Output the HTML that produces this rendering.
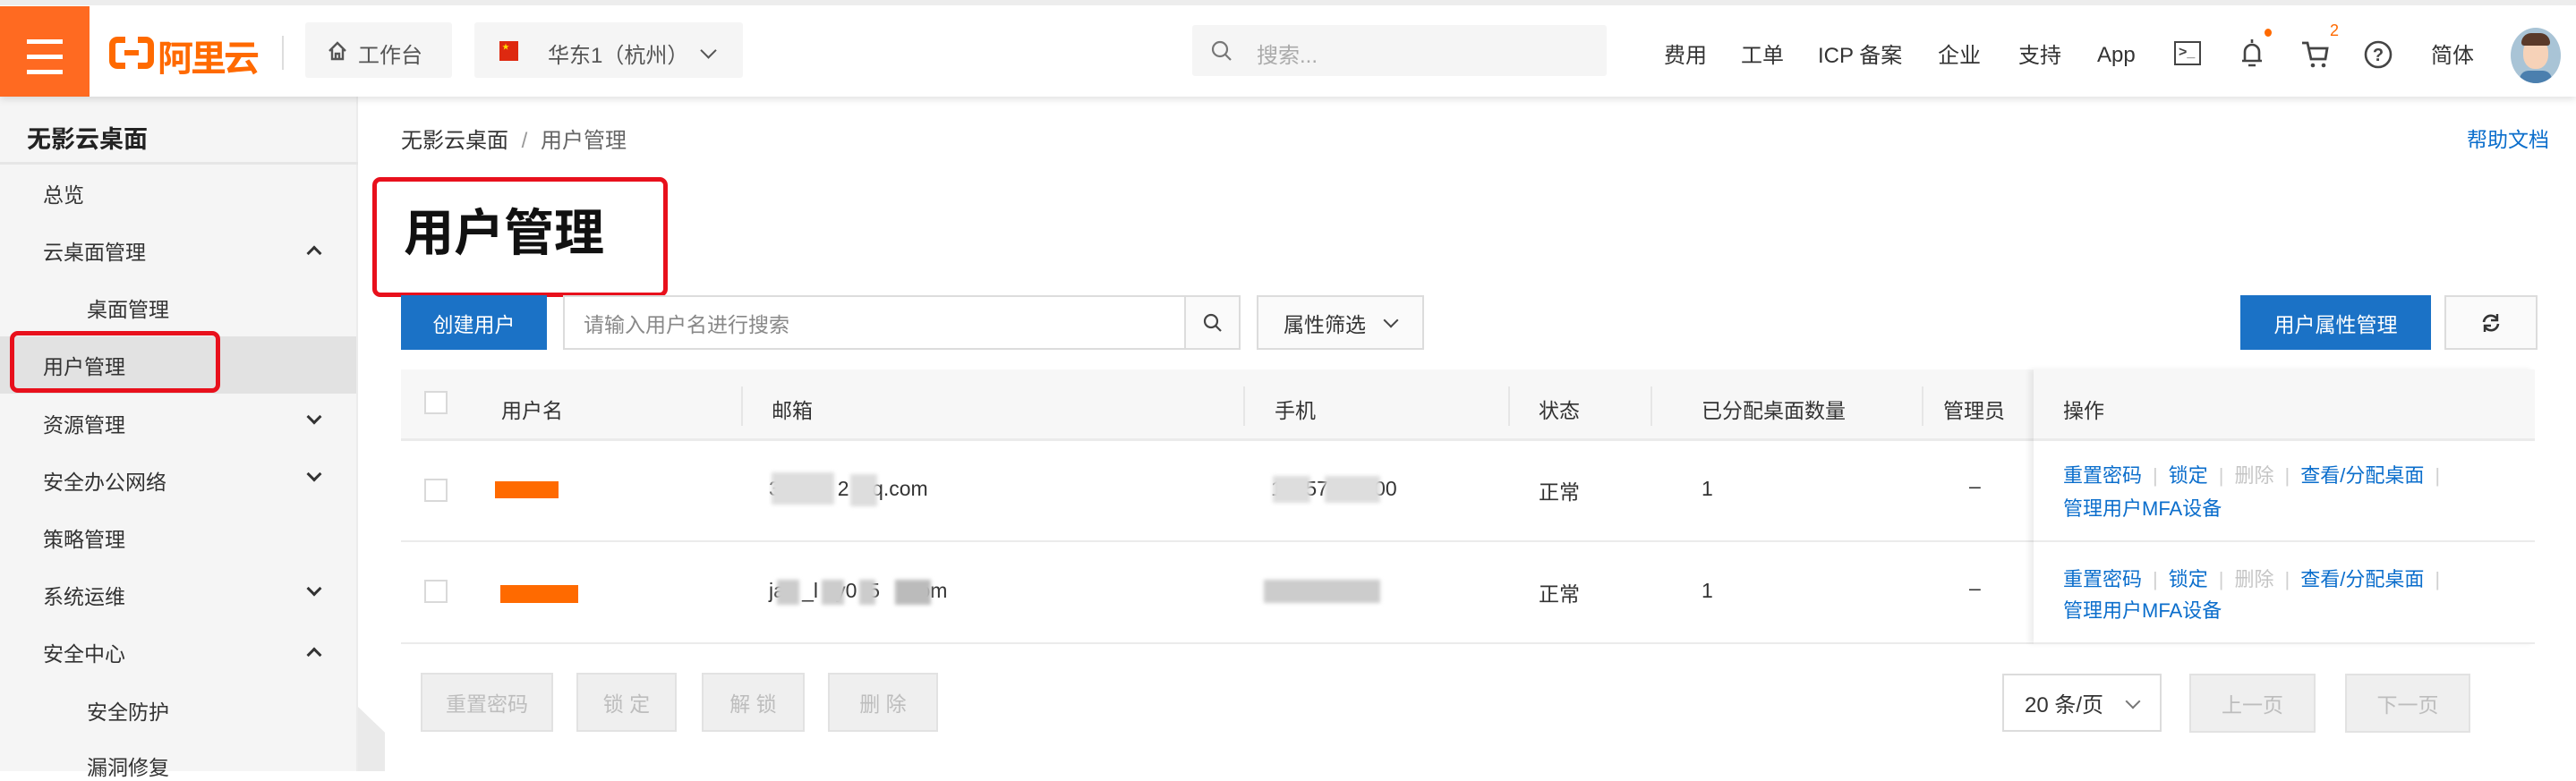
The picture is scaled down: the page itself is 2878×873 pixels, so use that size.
<!DOCTYPE html>
<html><head><meta charset="utf-8">
<style>
*{margin:0;padding:0;box-sizing:border-box}
body{width:2878px;height:862px;overflow:hidden;background:#fff;font-family:"Liberation Sans","Noto Sans CJK SC",sans-serif;color:#333;position:relative;font-size:23px}
.a{position:absolute;white-space:nowrap}
.hdr{position:absolute;left:0;top:0;width:2878px;height:108px;background:#fff;border-top:6px solid #ededed;box-shadow:0 3px 8px rgba(0,0,0,.12);z-index:3}
.nav{position:absolute;top:40px;font-size:24px;color:#333}
.side{position:absolute;left:0;top:108px;width:400px;height:754px;background:#f5f5f5;border-right:2px solid #ececec}
.si{position:absolute;left:48px;font-size:23px;color:#333}
.chev{position:absolute;left:345px;width:12px;height:12px;border-right:3px solid #333;border-bottom:3px solid #333}
.dn{transform:rotate(45deg)}
.up{transform:rotate(-135deg)}
.red{position:absolute;border:5px solid #e8101c;border-radius:9px}
.th{position:absolute;top:440px;font-size:23px;color:#333}
.sep{position:absolute;top:432px;width:2px;height:44px;background:#e6e6e6}
.cb{position:absolute;width:26px;height:26px;border:2px solid #d9d9d9;background:#fff}
.op{position:absolute;font-size:22px;color:#0b6ecc}
.op .d{color:#c5c5c5}
.op .p{color:#d0d0d0;margin:0 12px}
.dbtn{position:absolute;top:752px;height:66px;background:#efefef;border:2px solid #e2e2e2;color:#bdbdbd;font-size:23px;display:flex;align-items:center;justify-content:center}
.blur{position:absolute;background:#ddd;filter:blur(2px)}
</style></head><body>
<div class="hdr">
 <div class="a" style="left:0;top:1px;width:100px;height:101px;background:#ff6a21"></div>
 <div class="a" style="left:30px;top:38px;width:40px;height:5px;background:#fff"></div>
 <div class="a" style="left:30px;top:55px;width:40px;height:5px;background:#fff"></div>
 <div class="a" style="left:30px;top:72px;width:40px;height:5px;background:#fff"></div>
 <div class="a" style="left:122px;top:35px;width:50px;height:36px;border:7px solid #ff6a00;border-radius:9px"></div>
 <div class="a" style="left:140px;top:26px;width:14px;height:54px;background:#fff"></div>
 <div class="a" style="left:139px;top:50px;width:16px;height:6px;background:#ff6a00"></div>
 <div class="a" style="left:176px;top:27px;font-size:40px;font-weight:bold;color:#ff6a00;letter-spacing:-3px">阿里云</div>
 <div class="a" style="left:315px;top:34px;width:2px;height:38px;background:#ddd"></div>
 <div class="a" style="left:341px;top:19px;width:164px;height:62px;background:#f5f5f5;border-radius:3px"></div>
 <svg class="a" style="left:365px;top:39px" width="24" height="24" viewBox="0 0 24 24"><path d="M3 12 L12 3 L21 12 M6 10 V21 H18 V10 M10 21 V15 H14 V21" fill="none" stroke="#555" stroke-width="2.4"/></svg>
 <div class="a" style="left:400px;top:36px;font-size:24px;color:#555">工作台</div>
 <div class="a" style="left:530px;top:19px;width:300px;height:62px;background:#f5f5f5;border-radius:3px"></div>
 <div class="a" style="left:558px;top:40px;width:21px;height:22px;background:#de2910"></div>
 <div class="a" style="left:561px;top:41px;font-size:8px;color:#ffde00">★</div>
 <div class="a" style="left:612px;top:36px;font-size:24px;color:#555">华东1（杭州）</div>
 <div class="a" style="left:785px;top:44px;width:13px;height:13px;border-right:2.5px solid #555;border-bottom:2.5px solid #555;transform:rotate(45deg)"></div>
 <div class="a" style="left:1332px;top:22px;width:463px;height:57px;background:#f5f5f5;border-radius:3px"></div>
 <svg class="a" style="left:1352px;top:38px" width="26" height="26" viewBox="0 0 26 26"><circle cx="11" cy="11" r="8" fill="none" stroke="#777" stroke-width="2.2"/><path d="M17 17 L23 23" stroke="#777" stroke-width="2.2"/></svg>
 <div class="a" style="left:1404px;top:36px;font-size:24px;color:#aaa">搜索...</div>
 <div class="nav" style="left:1859px;top:36px">费用</div>
 <div class="nav" style="left:1945px;top:36px">工单</div>
 <div class="nav" style="left:2031px;top:36px">ICP 备案</div>
 <div class="nav" style="left:2165px;top:36px">企业</div>
 <div class="nav" style="left:2255px;top:36px">支持</div>
 <div class="nav" style="left:2343px;top:42px">App</div>
 <div class="a" style="left:2429px;top:40px;width:30px;height:27px;border:2.5px solid #444"></div>
 <div class="a" style="left:2434px;top:44px;font-size:16px;color:#444;font-weight:bold">&gt;_</div>
 <svg class="a" style="left:2500px;top:34px" width="32" height="38" viewBox="0 0 32 38"><path d="M16 4 V8 M8 28 V18 a8 8 0 0 1 16 0 V28 Z M5 28 H27 M12 33 H20" fill="none" stroke="#444" stroke-width="2.6"/></svg>
 <div class="a" style="left:2530px;top:26px;width:8px;height:9px;border-radius:50%;background:#ff6a00"></div>
 <svg class="a" style="left:2570px;top:38px" width="34" height="34" viewBox="0 0 34 34"><path d="M2 4 H8 L12 22 H28 L30 10 H10" fill="none" stroke="#444" stroke-width="2.8"/><circle cx="14" cy="29" r="2.3" fill="#444"/><circle cx="26" cy="29" r="2.3" fill="#444"/></svg>
 <div class="a" style="left:2603px;top:18px;font-size:18px;color:#ff6a00">2</div>
 <svg class="a" style="left:2640px;top:38px" width="34" height="34" viewBox="0 0 34 34"><circle cx="17" cy="17" r="14" fill="none" stroke="#444" stroke-width="2.6"/><text x="17" y="24" font-size="20" text-anchor="middle" fill="#444" font-family="Liberation Sans" font-weight="bold">?</text></svg>
 <div class="nav" style="left:2716px;top:36px">简体</div>
 <div class="a" style="left:2805px;top:25px;width:56px;height:62px;border-radius:50%;background:#a9c4d6;overflow:hidden">
  <div class="a" style="left:14px;top:12px;width:28px;height:34px;border-radius:45%;background:#f6d2b8"></div>
  <div class="a" style="left:12px;top:6px;width:32px;height:14px;border-radius:14px 14px 4px 4px;background:#5a3a2a"></div>
  <div class="a" style="left:10px;top:48px;width:36px;height:20px;border-radius:10px;background:#4b7fae"></div>
 </div>
</div>

<div class="side">
 <div class="a" style="left:30px;top:26px;font-size:27px;font-weight:bold;color:#222">无影云桌面</div>
 <div class="a" style="left:0;top:73px;width:400px;height:3px;background:#e6e6e6"></div>
 <div class="a" style="left:0;top:268px;width:398px;height:64px;background:#e2e2e2"></div>
</div>
<div class="si" style="top:199px">总览</div>
<div class="si" style="top:263px">云桌面管理</div><div class="chev up" style="top:277px"></div>
<div class="si" style="top:327px;left:97px">桌面管理</div>
<div class="si" style="top:391px">用户管理</div>
<div class="si" style="top:456px">资源管理</div><div class="chev dn" style="top:460px"></div>
<div class="si" style="top:520px">安全办公网络</div><div class="chev dn" style="top:524px"></div>
<div class="si" style="top:584px">策略管理</div>
<div class="si" style="top:648px">系统运维</div><div class="chev dn" style="top:652px"></div>
<div class="si" style="top:712px">安全中心</div><div class="chev up" style="top:726px"></div>
<div class="si" style="top:777px;left:97px">安全防护</div>
<div class="si" style="top:839px;left:97px">漏洞修复</div>
<div class="a" style="left:400px;top:790px;width:30px;height:72px;background:#eaeaea;clip-path:polygon(0 0,100% 40%,100% 100%,0 100%)"></div>
<div class="red" style="left:11px;top:370px;width:235px;height:69px"></div>

<div class="a" style="left:448px;top:137px;font-size:24px;color:#333">无影云桌面 <span style="color:#999;margin:0 8px">/</span> <span style="color:#666">用户管理</span></div>
<div class="a" style="left:2756px;top:137px;font-size:23px;color:#0b6ecc">帮助文档</div>
<div class="a" style="left:451px;top:216px;font-size:56px;font-weight:bold;color:#111">用户管理</div>
<div class="red" style="left:416px;top:198px;width:330px;height:134px"></div>

<div class="a" style="left:448px;top:330px;width:163px;height:61px;background:#1b72c6;color:#fff;font-size:23px;display:flex;align-items:center;justify-content:center">创建用户</div>
<div class="a" style="left:629px;top:330px;width:696px;height:61px;border:2px solid #dcdcdc"></div>
<div class="a" style="left:652px;top:344px;font-size:23px;color:#888">请输入用户名进行搜索</div>
<div class="a" style="left:1323px;top:330px;width:63px;height:61px;border:2px solid #dcdcdc;background:#fafafa"></div>
<svg class="a" style="left:1343px;top:349px" width="24" height="24" viewBox="0 0 24 24"><circle cx="10" cy="10" r="7" fill="none" stroke="#444" stroke-width="2.2"/><path d="M15 15 L21 21" stroke="#444" stroke-width="2.2"/></svg>
<div class="a" style="left:1404px;top:330px;width:187px;height:61px;border:2px solid #dcdcdc;background:#fafafa"></div>
<div class="a" style="left:1434px;top:344px;font-size:23px;color:#333">属性筛选</div>
<div class="a" style="left:1548px;top:352px;width:12px;height:12px;border-right:2.5px solid #444;border-bottom:2.5px solid #444;transform:rotate(45deg)"></div>
<div class="a" style="left:2503px;top:330px;width:213px;height:61px;background:#1b72c6;color:#fff;font-size:23px;display:flex;align-items:center;justify-content:center">用户属性管理</div>
<div class="a" style="left:2731px;top:330px;width:104px;height:61px;border:2px solid #dcdcdc;background:#fafafa"></div>
<svg class="a" style="left:2770px;top:348px" width="26" height="26" viewBox="0 0 26 26"><path d="M5 12 A8 8 0 0 1 20 9 M21 14 A8 8 0 0 1 6 17" fill="none" stroke="#333" stroke-width="2.6"/><path d="M20 3 V10 H13" fill="none" stroke="#333" stroke-width="2.4"/><path d="M6 23 V16 H13" fill="none" stroke="#333" stroke-width="2.4"/></svg>

<div class="a" style="left:448px;top:413px;width:2384px;height:78px;background:#f7f7f7"></div>
<div class="a" style="left:448px;top:490px;width:2384px;height:3px;background:#ebebeb"></div>
<div class="a" style="left:448px;top:604px;width:2384px;height:2px;background:#ebebeb"></div>
<div class="a" style="left:448px;top:718px;width:2384px;height:2px;background:#ebebeb"></div>
<div class="cb" style="left:474px;top:437px"></div>
<div class="th" style="left:560px">用户名</div>
<div class="sep" style="left:828px"></div>
<div class="th" style="left:862px">邮箱</div>
<div class="sep" style="left:1389px"></div>
<div class="th" style="left:1424px">手机</div>
<div class="sep" style="left:1685px"></div>
<div class="th" style="left:1719px">状态</div>
<div class="sep" style="left:1844px"></div>
<div class="th" style="left:1901px">已分配桌面数量</div>
<div class="sep" style="left:2147px"></div>
<div class="th" style="left:2171px">管理员</div>
<div class="a" style="left:2272px;top:413px;width:560px;height:306px;background:#fff;box-shadow:-5px 0 6px rgba(0,0,0,.07)"></div>
<div class="a" style="left:2272px;top:413px;width:560px;height:78px;background:#f7f7f7"></div>
<div class="a" style="left:2272px;top:490px;width:560px;height:3px;background:#ebebeb"></div>
<div class="a" style="left:2272px;top:604px;width:560px;height:2px;background:#ebebeb"></div>
<div class="a" style="left:2272px;top:718px;width:560px;height:2px;background:#ebebeb"></div>
<div class="th" style="left:2305px">操作</div>

<div class="cb" style="left:474px;top:535px"></div>
<div class="a" style="left:553px;top:538px;width:71px;height:19px;background:#ff6a00"></div>
<div class="a" style="left:859px;top:533px;font-size:23px;color:#333">30&nbsp;&nbsp;&nbsp;4&nbsp;&nbsp;&nbsp;2&nbsp;&nbsp;qq.com</div>
<div class="blur" style="left:862px;top:528px;width:70px;height:36px"></div>
<div class="blur" style="left:950px;top:530px;width:30px;height:36px"></div>
<div class="a" style="left:1420px;top:533px;font-size:23px;color:#333">17857100200</div>
<div class="blur" style="left:1422px;top:532px;width:42px;height:30px"></div>
<div class="blur" style="left:1480px;top:532px;width:62px;height:30px"></div>
<div class="a" style="left:1719px;top:531px">正常</div>
<div class="a" style="left:1901px;top:533px">1</div>
<div class="a" style="left:2200px;top:530px">–</div>

<div class="cb" style="left:474px;top:648px"></div>
<div class="a" style="left:559px;top:654px;width:87px;height:20px;background:#ff6a00"></div>
<div class="a" style="left:859px;top:647px;font-size:23px;color:#333">ja&nbsp;&nbsp;&nbsp;_l&nbsp;&nbsp;&nbsp;y0&nbsp;&nbsp;5&nbsp;&nbsp;&nbsp;&nbsp;.com</div>
<div class="blur" style="left:868px;top:648px;width:25px;height:28px;background:#ccc"></div>
<div class="blur" style="left:918px;top:648px;width:25px;height:28px;background:#ccc"></div>
<div class="blur" style="left:960px;top:648px;width:18px;height:28px;background:#ccc"></div>
<div class="blur" style="left:1000px;top:648px;width:40px;height:28px;background:#bbb"></div>
<div class="blur" style="left:1412px;top:648px;width:130px;height:26px;background:#ccc"></div>
<div class="a" style="left:1719px;top:645px">正常</div>
<div class="a" style="left:1901px;top:647px">1</div>
<div class="a" style="left:2200px;top:644px">–</div>

<div class="op" style="left:2305px;top:514px">重置密码<span class="p">|</span>锁定<span class="p">|</span><span class="d">删除</span><span class="p">|</span>查看/分配桌面<span class="p">|</span></div>
<div class="op" style="left:2305px;top:551px">管理用户MFA设备</div>
<div class="op" style="left:2305px;top:630px">重置密码<span class="p">|</span>锁定<span class="p">|</span><span class="d">删除</span><span class="p">|</span>查看/分配桌面<span class="p">|</span></div>
<div class="op" style="left:2305px;top:665px">管理用户MFA设备</div>

<div class="dbtn" style="left:470px;width:148px">重置密码</div>
<div class="dbtn" style="left:644px;width:112px">锁 定</div>
<div class="dbtn" style="left:784px;width:115px">解 锁</div>
<div class="dbtn" style="left:925px;width:123px">删 除</div>

<div class="a" style="left:2237px;top:753px;width:178px;height:65px;border:2px solid #dcdcdc"></div>
<div class="a" style="left:2262px;top:768px;font-size:24px;color:#333">20 条/页</div>
<div class="a" style="left:2377px;top:778px;width:12px;height:12px;border-right:2px solid #777;border-bottom:2px solid #777;transform:rotate(45deg)"></div>
<div class="dbtn" style="left:2446px;width:141px;top:753px">上一页</div>
<div class="dbtn" style="left:2620px;width:140px;top:753px">下一页</div>
</body></html>
